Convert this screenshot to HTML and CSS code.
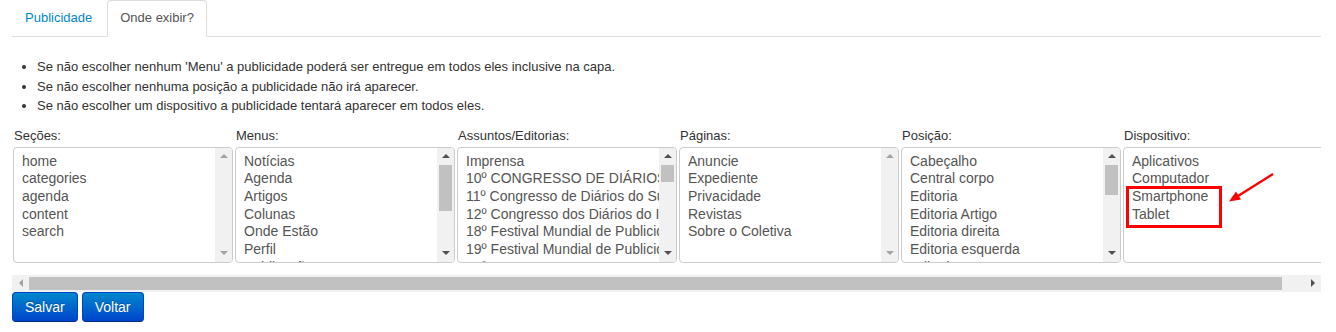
FILE: index.html
```html
<!DOCTYPE html>
<html lang="pt-BR">
<head>
  <meta charset="UTF-8" />
  <title>Onde exibir?</title>
  <link rel="stylesheet" href="styles.css">
</head>
<body>
  <div class="page">
    <ul class="nav-tabs">
      <li><a href="#">Publicidade</a></li>
      <li class="active"><a href="#">Onde exibir?</a></li>
    </ul>

    <ul class="hints">
      <li>Se não escolher nenhum 'Menu' a publicidade poderá ser entregue em todos eles inclusive na capa.</li>
      <li>Se não escolher nenhuma posição a publicidade não irá aparecer.</li>
      <li>Se não escolher um dispositivo a publicidade tentará aparecer em todos eles.</li>
    </ul>

    <div class="scroller">
      <div class="columns">
        <div class="field">
          <label>Seções:</label>
          <div class="listbox">
            <div class="options">
              <div>home</div>
              <div>categories</div>
              <div>agenda</div>
              <div>content</div>
              <div>search</div>
            </div>
            <div class="vbar disabled">
              <span class="arrow up"></span>
              <span class="fill"></span>
              <span class="arrow down"></span>
            </div>
          </div>
        </div>

        <div class="field">
          <label>Menus:</label>
          <div class="listbox">
            <div class="options">
              <div>Notícias</div>
              <div>Agenda</div>
              <div>Artigos</div>
              <div>Colunas</div>
              <div>Onde Estão</div>
              <div>Perfil</div>
              <div>Publicações</div>
            </div>
            <div class="vbar">
              <span class="arrow up"></span>
              <span class="thumb thumb-lg"></span>
              <span class="fill"></span>
              <span class="arrow down"></span>
            </div>
          </div>
        </div>

        <div class="field">
          <label>Assuntos/Editorias:</label>
          <div class="listbox">
            <div class="options">
              <div>Imprensa</div>
              <div>10º CONGRESSO DE DIÁRIOS DO INTERIOR</div>
              <div>11º Congresso de Diários do Sul</div>
              <div>12º Congresso dos Diários do Interior</div>
              <div>18º Festival Mundial de Publicidade</div>
              <div>19º Festival Mundial de Publicidade</div>
              <div>21º FESTIVAL MUNDIAL DE PUBLICIDADE</div>
            </div>
            <div class="vbar">
              <span class="arrow up"></span>
              <span class="thumb thumb-sm"></span>
              <span class="fill"></span>
              <span class="arrow down"></span>
            </div>
          </div>
        </div>

        <div class="field">
          <label>Páginas:</label>
          <div class="listbox">
            <div class="options">
              <div>Anuncie</div>
              <div>Expediente</div>
              <div>Privacidade</div>
              <div>Revistas</div>
              <div>Sobre o Coletiva</div>
            </div>
            <div class="vbar disabled">
              <span class="arrow up"></span>
              <span class="fill"></span>
              <span class="arrow down"></span>
            </div>
          </div>
        </div>

        <div class="field">
          <label>Posição:</label>
          <div class="listbox">
            <div class="options">
              <div>Cabeçalho</div>
              <div>Central corpo</div>
              <div>Editoria</div>
              <div>Editoria Artigo</div>
              <div>Editoria direita</div>
              <div>Editoria esquerda</div>
              <div>Editoria Foto</div>
            </div>
            <div class="vbar">
              <span class="arrow up"></span>
              <span class="thumb thumb-md"></span>
              <span class="fill"></span>
              <span class="arrow down"></span>
            </div>
          </div>
        </div>

        <div class="field">
          <label>Dispositivo:</label>
          <div class="listbox">
            <div class="options">
              <div>Aplicativos</div>
              <div>Computador</div>
              <div>Smartphone</div>
              <div>Tablet</div>
            </div>
            <div class="vbar disabled">
              <span class="arrow up"></span>
              <span class="fill"></span>
              <span class="arrow down"></span>
            </div>
          </div>
          <!-- marcação em vermelho -->
          <div class="mark-box"></div>
          <svg class="mark-arrow" width="60" height="40" viewBox="0 0 60 40">
            <line x1="50" y1="7" x2="15" y2="29" stroke="#f00" stroke-width="2.5" />
            <polygon points="6,34.5 18,32.5 13,24.5" fill="#f00" />
          </svg>
        </div>
      </div>

      <div class="hbar">
        <span class="arrow left"></span>
        <div class="htrack"><span class="hthumb"></span></div>
        <span class="arrow right"></span>
      </div>
    </div>

    <div class="actions">
      <button class="btn">Salvar</button>
      <button class="btn">Voltar</button>
    </div>
  </div>
</body>
</html>
```

FILE: styles.css
```css
body {
  margin: 0;
  font-family: "Liberation Sans", Arial, sans-serif;
  font-size: 13px;
  color: #333;
  background-color: #fff;
}

.page {
  padding: 0 15px 0 12px;
}

/* abas */

.nav-tabs {
  display: flex;
  list-style: none;
  margin: 0;
  padding: 0;
  border-bottom: 1px solid #ddd;
}

.nav-tabs li {
  margin-bottom: -1px;
  margin-right: 2px;
}

.nav-tabs a {
  display: block;
  padding: 7px 12px 8px;
  line-height: 20px;
  color: #0088cc;
  text-decoration: none;
  border: 1px solid transparent;
  border-radius: 4px 4px 0 0;
}

.nav-tabs .active a {
  color: #555;
  background-color: #fff;
  border-color: #ddd;
  border-bottom-color: transparent;
}

/* avisos */

.hints {
  margin: 20px 0 11px;
  padding-left: 25px;
  line-height: 19.5px;
}

/* listas */

.scroller {
  overflow: hidden;
}

.columns {
  display: flex;
  gap: 2px;
  padding-left: 1px;
  padding-bottom: 12px;
}

.field {
  flex: 0 0 220px;
  width: 220px;
  min-width: 0;
  position: relative;
}

.field label {
  display: block;
  line-height: 18px;
  margin-bottom: 2px;
  padding-left: 1px;
}

.listbox {
  display: flex;
  box-sizing: border-box;
  width: 220px;
  height: 116px;
  border: 1px solid #ccc;
  border-radius: 4px;
  overflow: hidden;
}

.options {
  flex: 1;
  min-width: 0;
  padding: 5px 0 0 8px;
  overflow: hidden;
  white-space: nowrap;
  font-size: 14px;
  line-height: 17.7px;
  color: #555;
}

.options div {
  overflow: hidden;
  text-overflow: clip;
}

.vbar {
  flex: 0 0 17px;
  display: flex;
  flex-direction: column;
  background-color: #f1f1f1;
}

.vbar .fill {
  flex: 1;
}

.thumb {
  margin: 0 2px;
  background-color: #c1c1c1;
}

.thumb-lg { height: 46px; }
.thumb-md { height: 30px; }
.thumb-sm { height: 17px; }

.arrow {
  position: relative;
  flex: 0 0 17px;
  height: 17px;
}

.arrow::after {
  content: '';
  position: absolute;
  left: 50%;
  top: 50%;
  width: 0;
  height: 0;
  border: 4px solid transparent;
}

.arrow.up::after {
  margin: -6px 0 0 -4px;
  border-bottom-color: #505050;
}

.arrow.down::after {
  margin: -2px 0 0 -4px;
  border-top-color: #505050;
}

.vbar.disabled .arrow.up::after {
  border-bottom-color: #a3a3a3;
}

.vbar.disabled .arrow.down::after {
  border-top-color: #a3a3a3;
}

.arrow.left::after {
  margin: -4px 0 0 -6px;
  border-right-color: #a3a3a3;
}

.arrow.right::after {
  margin: -4px 0 0 -2px;
  border-left-color: #505050;
}

.hbar {
  display: flex;
  height: 17px;
  background-color: #f1f1f1;
}

.htrack {
  flex: 1;
  padding: 2px 0;
}

.hthumb {
  display: block;
  width: 1253px;
  height: 13px;
  background-color: #c1c1c1;
}

/* marcação */

.mark-box {
  position: absolute;
  left: 3px;
  top: 59px;
  width: 96px;
  height: 42px;
  box-sizing: border-box;
  border: 3px solid #f00;
}

.mark-arrow {
  position: absolute;
  left: 100px;
  top: 40px;
}

/* botões */

.actions {
  display: flex;
  gap: 4px;
}

.btn {
  height: 30px;
  padding: 0 12px;
  font-family: "Liberation Sans", Arial, sans-serif;
  font-size: 14px;
  color: #fff;
  text-shadow: 0 -1px 0 rgba(0, 0, 0, 0.25);
  background-color: #0074cc;
  background-image: linear-gradient(to bottom, #0088cc, #0044cc);
  border: 1px solid #0044cc;
  border-bottom-color: #002a80;
  border-radius: 4px;
  cursor: pointer;
}
```
